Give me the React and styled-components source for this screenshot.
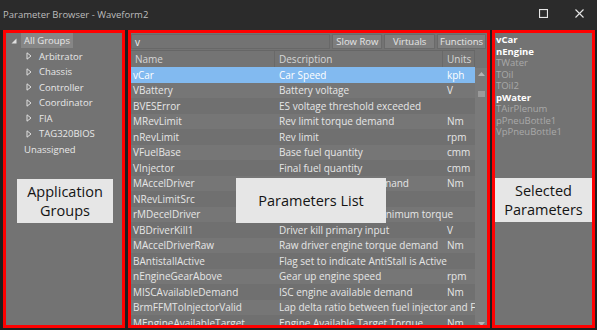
import React from 'react';
import styled, { createGlobalStyle } from 'styled-components';

const GlobalStyle = createGlobalStyle`
  *, *::before, *::after {
    box-sizing: border-box;
  }
  html, body {
    margin: 0;
    padding: 0;
    background: #1f1f1f;
  }
  body {
    font-family: 'Open Sans', 'Noto Sans', sans-serif;
    font-size: 9px;
  }
`;

const Window = styled.div`
  width: 597px;
  height: 330px;
  background: #1f1f1f;
  display: flex;
  flex-direction: column;
  overflow: hidden;
`;

const TitleBar = styled.div`
  height: 30px;
  flex: none;
  background: #2b2b2b;
  display: flex;
  align-items: center;
  padding: 0 0 0 3px;
  color: #bdbdbd;
  font-size: 9.5px;
`;

const TitleText = styled.div`
  flex: 1;
  margin-top: -2px;
`;

const TitleButton = styled.div`
  width: 36px;
  height: 30px;
  display: flex;
  align-items: center;
  justify-content: center;
  margin-top: -4px;
`;

const Body = styled.div`
  flex: 1;
  display: flex;
  padding: 0 2px 2px 3px;
  gap: 3px;
  min-height: 0;
`;

const Panel = styled.div`
  position: relative;
  width: ${({ w }) => w}px;
  flex: none;
  border: 3px solid #ff0000;
  background: #737373;
  overflow: hidden;
  margin-right: ${({ mr }) => mr || 0}px;
`;

const Tree = styled.div`
  color: #e8e8e8;
  font-size: 9.5px;
`;

const TreeRow = styled.div`
  height: 15.5px;
  display: flex;
  align-items: center;
  padding-left: ${({ level }) => (level ? 20 : 5)}px;
`;

const Arrow = styled.span`
  width: 10px;
  display: flex;
  align-items: center;
  flex: none;
`;

const TreeLabel = styled.span`
  padding: 2px 3px;
  background: ${({ active }) => (active ? '#868686' : 'transparent')};
  line-height: 11px;
`;

const Note = styled.div`
  position: absolute;
  left: ${({ x }) => x}px;
  top: ${({ y }) => y}px;
  width: ${({ w }) => w}px;
  height: ${({ h }) => h}px;
  background: #e6e6e6;
  color: #141414;
  font-size: 14.5px;
  line-height: 19px;
  display: flex;
  align-items: center;
  justify-content: center;
  text-align: center;
`;

const Toolbar = styled.div`
  height: 17px;
  display: flex;
  align-items: center;
  gap: 2px;
  padding-right: 1px;
`;

const Search = styled.div`
  width: 200px;
  height: 15px;
  border: 1px solid #686868;
  color: #f0f0f0;
  display: flex;
  align-items: center;
  padding-left: 3px;
  font-size: 10px;
`;

const ToolButton = styled.div`
  width: ${({ w }) => w}px;
  height: 15px;
  background: #7e7e7e;
  border: 1px solid #6a6a6a;
  color: #e6e6e6;
  display: flex;
  align-items: center;
  justify-content: center;
  font-size: 9.5px;
`;

const Table = styled.div`
  display: flex;
  font-size: 10px;
`;

const Grid = styled.div`
  width: 344px;
  flex: none;
  overflow: hidden;
`;

const HeaderRow = styled.div`
  display: grid;
  grid-template-columns: 144px 168px 32px;
  height: 17px;
  border-top: 1px solid #666;
`;

const HeaderCell = styled.div`
  display: flex;
  align-items: center;
  padding-left: 4px;
  color: #d6d6d6;
  border-right: 1px solid #696969;
  background: #747474;
`;

const Row = styled.div`
  display: grid;
  grid-template-columns: 144px 168px 32px;
  height: 15.5px;
  background: ${({ selected, odd }) =>
    selected ? '#82baf0' : odd ? '#767676' : '#707070'};
  color: ${({ selected }) => (selected ? '#ffffff' : '#e6e6e6')};
  overflow: hidden;
`;

const Cell = styled.div`
  display: flex;
  align-items: center;
  padding-left: ${({ pad }) => pad ?? 4}px;
  white-space: nowrap;
  overflow: hidden;
  grid-column: ${({ span }) => (span ? `span ${span}` : 'auto')};
`;

const ScrollBar = styled.div`
  width: 12px;
  flex: none;
  margin-top: 18px;
  height: 262px;
  background: #7a7a7a;
  display: flex;
  flex-direction: column;
  align-items: center;
`;

const ScrollArrow = styled.div`
  height: 12px;
  display: flex;
  align-items: center;
  justify-content: center;
`;

const Thumb = styled.div`
  width: 7px;
  height: 6px;
  background: #9a9a9a;
  margin-top: 11px;
`;

const Spacer = styled.div`
  flex: 1;
`;

const SelList = styled.div`
  padding: 1px 0 0 1px;
`;

const SelItem = styled.div`
  height: 11.5px;
  line-height: 11.5px;
  font-size: 9.5px;
  font-weight: ${({ on }) => (on ? 700 : 400)};
  color: ${({ on }) => (on ? '#ffffff' : '#a9a9a9')};
  white-space: nowrap;
`;

const groups = ['Arbitrator', 'Chassis', 'Controller', 'Coordinator', 'FIA', 'TAG320BIOS'];

const params = [
  ['vCar', 'Car Speed', 'kph'],
  ['VBattery', 'Battery voltage', 'V'],
  ['BVESError', 'ES voltage threshold exceeded', ''],
  ['MRevLimit', 'Rev limit torque demand', 'Nm'],
  ['nRevLimit', 'Rev limit', 'rpm'],
  ['VFuelBase', 'Base fuel quantity', 'cmm'],
  ['VInjector', 'Final fuel quantity', 'cmm'],
  ['MAccelDriver', 'Driver accel torque demand', 'Nm'],
  ['NRevLimitSrc', 'Rev limit source', ''],
  ['rMDecelDriver', 'Decel driver ratio to minimum torque', ''],
  ['VBDriverKill1', 'Driver kill primary input', 'V'],
  ['MAccelDriverRaw', 'Raw driver engine torque demand', 'Nm'],
  ['BAntistallActive', 'Flag set to indicate AntiStall is Active', ''],
  ['nEngineGearAbove', 'Gear up engine speed', 'rpm'],
  ['MISCAvailableDemand', 'ISC engine available demand', 'Nm'],
  ['BrmFFMToInjectorValid', 'Lap delta ratio between fuel injector and FFM', ''],
  ['MEngineAvailableTarget', 'Engine Available Target Torque', 'Nm'],
];

const selected = [
  ['vCar', true],
  ['nEngine', true],
  ['TWater', false],
  ['TOil', false],
  ['TOil2', false],
  ['pWater', true],
  ['TAirPlenum', false],
  ['pPneuBottle1', false],
  ['VpPneuBottle1', false],
];

const Expanded = () => (
  <svg width="6" height="6" viewBox="0 0 6 6">
    <polygon points="5.5,0.5 5.5,5.5 0.5,5.5" fill="#e0e0e0" />
  </svg>
);

const Collapsed = () => (
  <svg width="6" height="8" viewBox="0 0 6 8">
    <polygon points="1,0.8 5,4 1,7.2" fill="none" stroke="#e0e0e0" strokeWidth="1" />
  </svg>
);

export default function App() {
  return (
    <Window>
      <GlobalStyle />
      <TitleBar>
        <TitleText>Parameter Browser - Waveform2</TitleText>
        <TitleButton>
          <svg width="9" height="9" viewBox="0 0 9 9">
            <rect x="0.5" y="0.5" width="8" height="8" fill="none" stroke="#e6e6e6" strokeWidth="1.2" />
          </svg>
        </TitleButton>
        <TitleButton>
          <svg width="9" height="9" viewBox="0 0 9 9">
            <path d="M0.5 0.5 L8.5 8.5 M8.5 0.5 L0.5 8.5" stroke="#e6e6e6" strokeWidth="1.1" />
          </svg>
        </TitleButton>
      </TitleBar>
      <Body>
        <Panel w={122}>
          <Tree>
            <TreeRow>
              <Arrow>
                <Expanded />
              </Arrow>
              <TreeLabel active>All Groups</TreeLabel>
            </TreeRow>
            {groups.map((g) => (
              <TreeRow level={1} key={g}>
                <Arrow>
                  <Collapsed />
                </Arrow>
                <TreeLabel>{g}</TreeLabel>
              </TreeRow>
            ))}
            <TreeRow>
              <Arrow />
              <TreeLabel>Unassigned</TreeLabel>
            </TreeRow>
          </Tree>
          <Note x={11} y={146} w={96} h={44}>
            Application
            <br />
            Groups
          </Note>
        </Panel>

        <Panel w={362} mr={-1}>
          <Toolbar>
            <Search>v</Search>
            <ToolButton w={50}>Slow Row</ToolButton>
            <ToolButton w={51}>Virtuals</ToolButton>
            <ToolButton w={49}>Functions</ToolButton>
          </Toolbar>
          <Table>
            <Grid>
              <HeaderRow>
                <HeaderCell>Name</HeaderCell>
                <HeaderCell>Description</HeaderCell>
                <HeaderCell>Units</HeaderCell>
              </HeaderRow>
              {params.map(([name, desc, unit], i) => (
                <Row key={name} selected={i === 0} odd={i % 2 === 1}>
                  <Cell pad={2}>{name}</Cell>
                  <Cell span={unit ? 1 : 2}>{desc}</Cell>
                  {unit && <Cell>{unit}</Cell>}
                </Row>
              ))}
            </Grid>
            <ScrollBar>
              <ScrollArrow>
                <svg width="7" height="4" viewBox="0 0 7 4">
                  <polygon points="0,4 3.5,0 7,4" fill="#b4b4b4" />
                </svg>
              </ScrollArrow>
              <Thumb />
              <Spacer />
              <ScrollArrow>
                <svg width="7" height="4" viewBox="0 0 7 4">
                  <polygon points="0,0 3.5,4 7,0" fill="#b4b4b4" />
                </svg>
              </ScrollArrow>
            </ScrollBar>
          </Table>
          <Note x={105} y={145} w={150} h={45}>
            Parameters List
          </Note>
        </Panel>

        <Panel w={103}>
          <SelList>
            {selected.map(([name, on]) => (
              <SelItem key={name} on={on}>
                {name}
              </SelItem>
            ))}
          </SelList>
          <Note x={0} y={145} w={97} h={44}>
            Selected
            <br />
            Parameters
          </Note>
        </Panel>
      </Body>
    </Window>
  );
}
